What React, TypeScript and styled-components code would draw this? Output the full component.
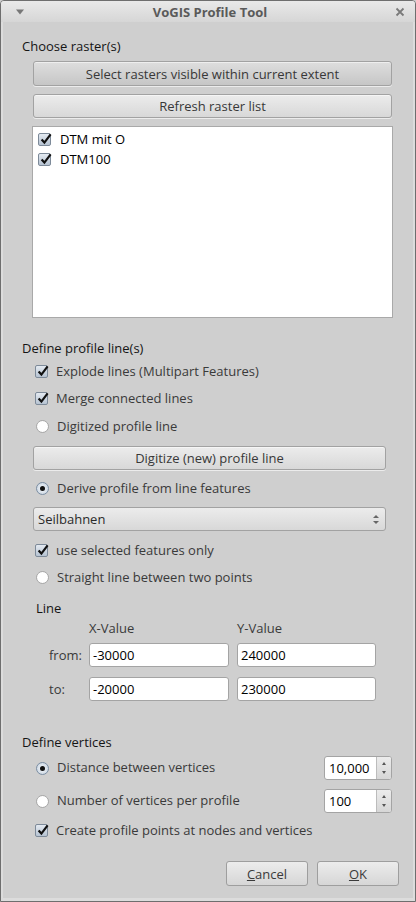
import React from "react"
import styled, { createGlobalStyle } from "styled-components"

const GlobalStyle = createGlobalStyle`
    html, body {
        margin: 0;
        padding: 0;
        background: #cfcfcf;
    }
    body {
        font-family: "Open Sans", "DejaVu Sans", sans-serif;
        font-size: 13px;
        color: #3a3a3a;
    }
`

const Window = styled.div`
    width: 416px;
    height: 902px;
    box-sizing: border-box;
    border: 1px solid #6e6e6e;
    border-radius: 4px 4px 0 0;
    background: #dcdcdc;
    display: flex;
    flex-direction: column;
    overflow: hidden;
`

const TitleBar = styled.div`
    height: 21px;
    flex: none;
    display: flex;
    align-items: center;
    justify-content: space-between;
    padding: 0 10px 0 14px;
    background: linear-gradient(#e9e9e9, #d6d6d6);
    font-weight: 700;
    font-size: 13px;
    color: #5a5a5a;
`

const TitleText = styled.div`
    flex: 1;
    text-align: center;
`

const Frame = styled.div`
    flex: 1;
    margin: 0 2px 3px 2px;
    background: #cfcfcf;
    display: flex;
    flex-direction: column;
    padding: 16px 0 0 19px;
`

const Heading = styled.div<{ $mt?: number, $ml?: number }>`
    height: 16px;
    line-height: 16px;
    margin-top: ${(p) => p.$mt || 0}px;
    margin-left: ${(p) => p.$ml || 0}px;
    color: #151515;
`

const PushButton = styled.div<{ $mt: number, $h: number, $right: number, $dark?: boolean }>`
    margin-top: ${(p) => p.$mt}px;
    margin-left: 11px;
    margin-right: ${(p) => p.$right}px;
    height: ${(p) => p.$h}px;
    box-sizing: border-box;
    border: 1px solid #a2a2a2;
    border-radius: 3px;
    background: ${(p) => p.$dark
        ? "linear-gradient(#dedede, #c6c6c6)"
        : "linear-gradient(#ececec, #d8d8d8)"};
    box-shadow: 0 1px 0 rgba(255,255,255,0.6), inset 0 1px 0 rgba(255,255,255,0.5);
    display: flex;
    align-items: center;
    justify-content: center;
    color: #383838;
`

const RasterList = styled.div`
    margin-top: 8px;
    margin-left: 10px;
    margin-right: 20px;
    height: 192px;
    box-sizing: border-box;
    background: #fff;
    border: 1px solid #a9a9a9;
    padding: 2px 0 0 5px;
    display: flex;
    flex-direction: column;
`

const ListItem = styled.div`
    height: 20px;
    display: flex;
    align-items: center;
    gap: 9px;
    color: #000;
`

const OptionRow = styled.div<{ $mt: number }>`
    margin-top: ${(p) => p.$mt}px;
    margin-left: 13px;
    height: 20px;
    display: flex;
    align-items: center;
    gap: 8px;
`

const Box = styled.span`
    width: 13px;
    height: 13px;
    flex: none;
    box-sizing: border-box;
    border: 1px solid #7d8a99;
    border-radius: 2px;
    background: linear-gradient(#e4eaf1, #b6c3d2);
    position: relative;
`

const Tick = styled.svg`
    position: absolute;
    left: 0;
    top: -2px;
`

const Round = styled.span<{ $on?: boolean }>`
    width: 13px;
    height: 13px;
    flex: none;
    margin-left: 1px;
    box-sizing: border-box;
    border-radius: 50%;
    border: 1px solid ${(p) => p.$on ? "#7b8ea3" : "#a8a8a8"};
    background: ${(p) => p.$on ? "radial-gradient(#f4f7fa, #c4d0dd)" : "radial-gradient(#ffffff 60%, #eeeeee)"};
    display: flex;
    align-items: center;
    justify-content: center;
`

const Dot = styled.span`
    width: 5px;
    height: 5px;
    border-radius: 50%;
    background: #111;
`

const Combo = styled.div`
    margin-top: 9px;
    margin-left: 11px;
    margin-right: 27px;
    height: 24px;
    box-sizing: border-box;
    border: 1px solid #a2a2a2;
    border-radius: 3px;
    background: linear-gradient(#ececec, #d8d8d8);
    display: flex;
    align-items: center;
    justify-content: space-between;
    padding: 0 6px 0 4px;
    color: #2a2a2a;
`

const Arrows = styled.div`
    display: flex;
    flex-direction: column;
    align-items: center;
    gap: 3px;
`

const Tri = styled.span<{ $up?: boolean }>`
    width: 0;
    height: 0;
    border-left: 3px solid transparent;
    border-right: 3px solid transparent;
    ${(p) => p.$up ? "border-bottom: 3px solid #666;" : "border-top: 3px solid #666;"}
`

const CoordGrid = styled.div`
    margin-top: 4px;
    margin-left: 18px;
    display: grid;
    grid-template-columns: 41px 140px 139px;
    column-gap: 8px;
    row-gap: 10px;
    align-items: center;
`

const ColLabel = styled.div`
    height: 16px;
    line-height: 16px;
    margin-bottom: -3px;
`

const RowLabel = styled.div<{ $indent: number }>`
    padding-left: ${(p) => p.$indent}px;
`

const TextField = styled.div`
    height: 24px;
    box-sizing: border-box;
    border: 1px solid #a4a4a4;
    border-radius: 3px;
    background: #fff;
    display: flex;
    align-items: center;
    padding-left: 3px;
    color: #000;
`

const VertexRow = styled.div<{ $mt: number }>`
    margin-top: ${(p) => p.$mt}px;
    margin-left: 13px;
    margin-right: 21px;
    height: 24px;
    display: flex;
    align-items: center;
    gap: 8px;
`

const VertexLabel = styled.div`
    flex: 1;
    margin-top: -3px;
`

const Spin = styled.div`
    width: 68px;
    height: 24px;
    box-sizing: border-box;
    border: 1px solid #a4a4a4;
    border-radius: 3px;
    background: #fff;
    display: flex;
    overflow: hidden;
`

const SpinValue = styled.div`
    flex: 1;
    display: flex;
    align-items: center;
    padding-left: 4px;
    color: #000;
`

const SpinButtons = styled.div`
    width: 14px;
    border-left: 1px solid #bcbcbc;
    background: linear-gradient(#ececec, #d6d6d6);
    display: flex;
    flex-direction: column;
    align-items: center;
    justify-content: center;
    gap: 6px;
`

const SmallTri = styled.span<{ $up?: boolean }>`
    width: 0;
    height: 0;
    border-left: 2px solid transparent;
    border-right: 2px solid transparent;
    ${(p) => p.$up ? "border-bottom: 3px solid #555;" : "border-top: 3px solid #555;"}
`

const DialogButtons = styled.div`
    margin-top: 21px;
    margin-right: 14px;
    display: flex;
    justify-content: flex-end;
    gap: 9px;
`

const DialogButton = styled.div`
    width: 82px;
    height: 25px;
    box-sizing: border-box;
    border: 1px solid #9e9e9e;
    border-radius: 3px;
    background: linear-gradient(#ececec, #d6d6d6);
    display: flex;
    align-items: center;
    justify-content: center;
    color: #3a3a3a;
`

const Mnemonic = styled.span`
    text-decoration: underline;
`

const Check: React.FC = () => (
    <Box>
        <Tick width="14" height="14" viewBox="0 0 14 14">
            <path d="M2.6 7.6 L5.4 10.6 L11.6 2.4" fill="none" stroke="#111" strokeWidth="2.2" />
        </Tick>
    </Box>
)

const Radio: React.FC<{ on?: boolean }> = ({ on }) => (
    <Round $on={on}>{on && <Dot />}</Round>
)

const App: React.FC = () => {
    return (
        <>
            <GlobalStyle />
            <Window>
                <TitleBar>
                    <svg width="10" height="6" viewBox="0 0 10 6">
                        <path d="M1 0.5 L9 0.5 L5 5.5 Z" fill="#777" />
                    </svg>
                    <TitleText>VoGIS Profile Tool</TitleText>
                    <svg width="10" height="10" viewBox="0 0 10 10">
                        <path d="M1.5 1.5 L8.5 8.5 M8.5 1.5 L1.5 8.5" stroke="#7a7a7a" strokeWidth="1.8" />
                    </svg>
                </TitleBar>
                <Frame>
                    <Heading>Choose raster(s)</Heading>
                    <PushButton $mt={7} $h={25} $right={21} $dark>Select rasters visible within current extent</PushButton>
                    <PushButton $mt={8} $h={24} $right={21}>Refresh raster list</PushButton>
                    <RasterList>
                        {["DTM mit O", "DTM100"].map((name) => (
                            <ListItem key={name}>
                                <Check />
                                <span>{name}</span>
                            </ListItem>
                        ))}
                    </RasterList>

                    <Heading $mt={22}>Define profile line(s)</Heading>
                    <OptionRow $mt={5}><Check /><span>Explode lines (Multipart Features)</span></OptionRow>
                    <OptionRow $mt={7}><Check /><span>Merge connected lines</span></OptionRow>
                    <OptionRow $mt={8}><Radio /><span>Digitized profile line</span></OptionRow>
                    <PushButton $mt={10} $h={24} $right={27}>Digitize (new) profile line</PushButton>
                    <OptionRow $mt={8}><Radio on /><span>Derive profile from line features</span></OptionRow>
                    <Combo>
                        <span>Seilbahnen</span>
                        <Arrows><Tri $up /><Tri /></Arrows>
                    </Combo>
                    <OptionRow $mt={9}><Check /><span>use selected features only</span></OptionRow>
                    <OptionRow $mt={7}><Radio /><span>Straight line between two points</span></OptionRow>

                    <Heading $mt={13} $ml={14}>Line</Heading>
                    <CoordGrid>
                        <div />
                        <ColLabel>X-Value</ColLabel>
                        <ColLabel>Y-Value</ColLabel>
                        <RowLabel $indent={9}>from:</RowLabel>
                        <TextField>-30000</TextField>
                        <TextField>240000</TextField>
                        <RowLabel $indent={9}>to:</RowLabel>
                        <TextField>-20000</TextField>
                        <TextField>230000</TextField>
                    </CoordGrid>

                    <Heading $mt={33}>Define vertices</Heading>
                    <VertexRow $mt={6}>
                        <Radio on />
                        <VertexLabel>Distance between vertices</VertexLabel>
                        <Spin>
                            <SpinValue>10,000</SpinValue>
                            <SpinButtons><SmallTri $up /><SmallTri /></SpinButtons>
                        </Spin>
                    </VertexRow>
                    <VertexRow $mt={9}>
                        <Radio />
                        <VertexLabel>Number of vertices per profile</VertexLabel>
                        <Spin>
                            <SpinValue>100</SpinValue>
                            <SpinButtons><SmallTri $up /><SmallTri /></SpinButtons>
                        </Spin>
                    </VertexRow>
                    <OptionRow $mt={7}><Check /><span>Create profile points at nodes and vertices</span></OptionRow>

                    <DialogButtons>
                        <DialogButton><span><Mnemonic>C</Mnemonic>ancel</span></DialogButton>
                        <DialogButton><span><Mnemonic>O</Mnemonic>K</span></DialogButton>
                    </DialogButtons>
                </Frame>
            </Window>
        </>
    )
}

export default App
